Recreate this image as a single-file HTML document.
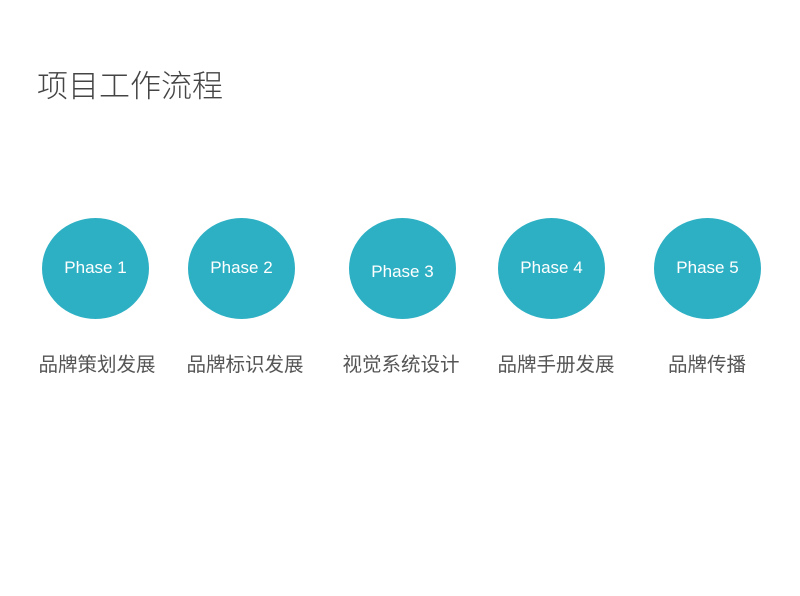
<!DOCTYPE html>
<html><head><meta charset="utf-8"><style>
body{margin:0;width:800px;height:596px;background:#fff;position:relative;overflow:hidden;font-family:"Liberation Sans","Noto Sans CJK SC",sans-serif}
.t{position:absolute;left:37px;top:61px;font-size:31px;color:#444;font-weight:300;letter-spacing:0}
.c{position:absolute;top:218px;width:107px;height:101px;border-radius:50%;background:#2eb0c4;color:#fff;font-size:17px;display:flex;align-items:center;justify-content:center}
.l{position:absolute;top:348px;width:180px;text-align:center;font-size:19.5px;color:#555}
</style></head><body>
<div class="t">项目工作流程</div>
<div class="c" style="left:42px;padding-bottom:2px;box-sizing:border-box">Phase 1</div>
<div class="c" style="left:188px;padding-bottom:2px;box-sizing:border-box">Phase 2</div>
<div class="c" style="left:349px;padding-top:6px;box-sizing:border-box">Phase 3</div>
<div class="c" style="left:498px;padding-bottom:2px;box-sizing:border-box">Phase 4</div>
<div class="c" style="left:654px;padding-bottom:2px;box-sizing:border-box">Phase 5</div>
<div class="l" style="left:7px">品牌策划发展</div>
<div class="l" style="left:155px">品牌标识发展</div>
<div class="l" style="left:311px">视觉系统设计</div>
<div class="l" style="left:466px">品牌手册发展</div>
<div class="l" style="left:617px">品牌传播</div>
</body></html>
